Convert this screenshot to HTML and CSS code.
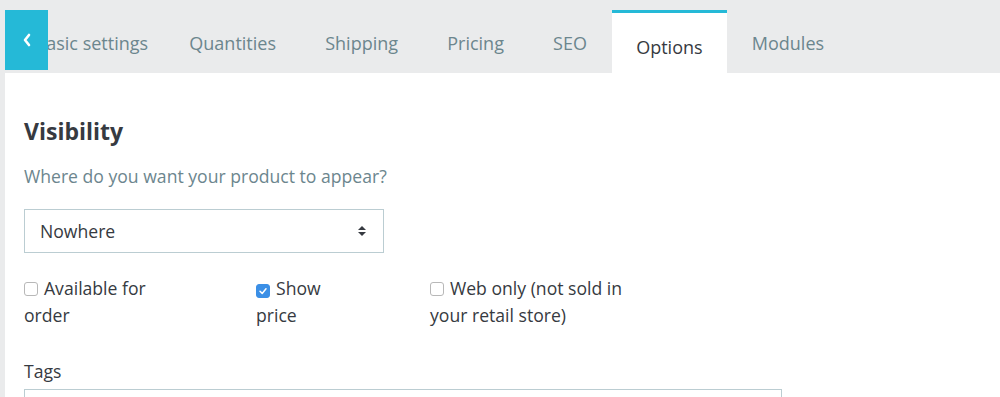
FILE: index.html
```html
<!DOCTYPE html>
<html lang="en">
<head>
  <meta charset="UTF-8">
  <title>Product options</title>
  <link rel="stylesheet" href="styles.css">
</head>
<body>

<div class="tabs-bar">
  <button class="tabs-back" aria-label="Previous tabs">
    <svg width="12" height="16" viewBox="0 0 12 16"><path d="M8 3 L4 8 L8 13" fill="none" stroke="#fff" stroke-width="2.6" stroke-linecap="round" stroke-linejoin="round"/></svg>
  </button>
  <nav class="tabs">
    <a href="#" class="tab">Basic settings</a>
    <a href="#" class="tab">Quantities</a>
    <a href="#" class="tab">Shipping</a>
    <a href="#" class="tab">Pricing</a>
    <a href="#" class="tab">SEO</a>
    <a href="#" class="tab active">Options</a>
    <a href="#" class="tab">Modules</a>
  </nav>
</div>

<main class="panel">
  <h2>Visibility</h2>
  <p class="hint">Where do you want your product to appear?</p>

  <div class="select">
    <span>Nowhere</span>
    <svg width="10" height="12" viewBox="0 0 10 12"><path d="M1 5 L5 1 L9 5 Z M1 7 L5 11 L9 7 Z" fill="#363a41"/></svg>
  </div>

  <div class="checks">
    <label class="check check-order"><span class="box"></span>Available for order</label>
    <label class="check check-price"><span class="box checked"><svg width="10" height="10" viewBox="0 0 10 10"><path d="M2 5.2 L4.2 7.4 L8 2.8" fill="none" stroke="#fff" stroke-width="1.5" stroke-linecap="round" stroke-linejoin="round"/></svg></span>Show price</label>
    <label class="check check-web"><span class="box"></span>Web only (not sold in your retail store)</label>
  </div>

  <label class="field-label">Tags</label>
  <div class="input"></div>
</main>

</body>
</html>
```

FILE: styles.css
```css
:root {
  --bar-bg: #eaebec;
  --accent: #25b9d7;
  --text: #363a41;
  --muted: #6c868e;
  --border: #bbcdd2;
}

* {
  margin: 0;
  padding: 0;
  box-sizing: border-box;
}

body {
  background: var(--bar-bg);
  font-family: 'Open Sans', sans-serif;
  color: var(--text);
  height: 397px;
  overflow: hidden;
}

.tabs-bar {
  position: relative;
  height: 73px;
}

.tabs-back {
  position: absolute;
  left: 5px;
  top: 10px;
  width: 43px;
  height: 60px;
  border: none;
  background: var(--accent);
  display: flex;
  align-items: center;
  justify-content: center;
  z-index: 2;
}

.tabs {
  display: flex;
  height: 73px;
  padding: 10px 0 0 10px;
}

.tab {
  padding: 19px 24.6px 0;
  font-size: 18px;
  line-height: 28px;
  color: var(--muted);
  text-decoration: none;
  white-space: nowrap;
}

/* first tab is partly scrolled under the back button */
.tab:first-child {
  padding-right: 16.6px;
}

.tab.active {
  background: #fff;
  color: var(--text);
  border-top: 3px solid var(--accent);
  padding-top: 20px;
}

.panel {
  margin-left: 5px;
  background: #fff;
  height: 324px;
  padding: 43px 19px 0;
}

.panel h2 {
  font-size: 23px;
  font-weight: 700;
  line-height: 30px;
  margin-bottom: 18px;
}

.hint {
  font-size: 17.6px;
  line-height: 24px;
  color: var(--muted);
  margin-bottom: 21px;
}

.select {
  width: 360px;
  height: 44px;
  border: 1px solid var(--border);
  display: flex;
  align-items: center;
  justify-content: space-between;
  padding: 0 16px 0 15px;
  font-size: 17.6px;
  margin-bottom: 22px;
}

.checks {
  display: flex;
  font-size: 17.6px;
  line-height: 27px;
  margin-bottom: 30px;
}

.check {
  display: block;
}

.check-order {
  width: 150px;
  margin-right: 82px;
}

.check-price {
  width: 90px;
  margin-right: 84px;
}

.check-web {
  width: 210px;
}

.box {
  display: inline-flex;
  align-items: center;
  justify-content: center;
  width: 14px;
  height: 14px;
  border: 1px solid #b8b8b8;
  border-radius: 3px;
  margin-right: 6px;
  vertical-align: -1px;
}

.box.checked {
  background: #3b8fe6;
  border-color: #3b8fe6;
}

.field-label {
  display: block;
  font-size: 17.6px;
  line-height: 24px;
  margin-bottom: 6px;
}

.input {
  width: 758px;
  height: 40px;
  border: 1px solid var(--border);
}
```
